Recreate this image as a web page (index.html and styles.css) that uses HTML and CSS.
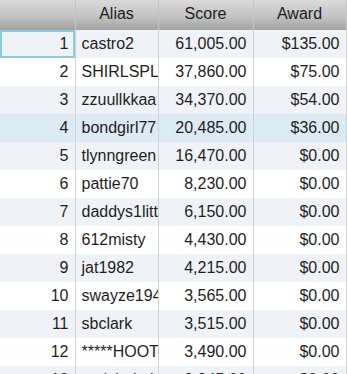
FILE: index.html
```html
<!DOCTYPE html>
<html>
<head>
<meta charset="utf-8">
<link rel="stylesheet" href="styles.css">
</head>
<body>
<table class="grid">
  <colgroup>
    <col class="c-rank"><col class="c-alias"><col class="c-score"><col class="c-award">
  </colgroup>
  <thead>
    <tr><th></th><th>Alias</th><th>Score</th><th>Award</th></tr>
  </thead>
  <tbody>
    <tr class="alt"><td class="num sel">1</td><td class="txt">castro2</td><td class="num">61,005.00</td><td class="num">$135.00</td></tr>
    <tr><td class="num">2</td><td class="txt">SHIRLSPL</td><td class="num">37,860.00</td><td class="num">$75.00</td></tr>
    <tr class="alt"><td class="num">3</td><td class="txt">zzuullkkaa</td><td class="num">34,370.00</td><td class="num">$54.00</td></tr>
    <tr class="hover"><td class="num">4</td><td class="txt">bondgirl77</td><td class="num">20,485.00</td><td class="num">$36.00</td></tr>
    <tr class="alt"><td class="num">5</td><td class="txt">tlynngreen</td><td class="num">16,470.00</td><td class="num">$0.00</td></tr>
    <tr><td class="num">6</td><td class="txt">pattie70</td><td class="num">8,230.00</td><td class="num">$0.00</td></tr>
    <tr class="alt"><td class="num">7</td><td class="txt">daddys1little</td><td class="num">6,150.00</td><td class="num">$0.00</td></tr>
    <tr><td class="num">8</td><td class="txt">612misty</td><td class="num">4,430.00</td><td class="num">$0.00</td></tr>
    <tr class="alt"><td class="num">9</td><td class="txt">jat1982</td><td class="num">4,215.00</td><td class="num">$0.00</td></tr>
    <tr><td class="num">10</td><td class="txt">swayze1948</td><td class="num">3,565.00</td><td class="num">$0.00</td></tr>
    <tr class="alt"><td class="num">11</td><td class="txt">sbclark</td><td class="num">3,515.00</td><td class="num">$0.00</td></tr>
    <tr><td class="num">12</td><td class="txt">*****HOOTIE</td><td class="num">3,490.00</td><td class="num">$0.00</td></tr>
    <tr class="alt"><td class="num">13</td><td class="txt">tonisbabyboo</td><td class="num">3,245.00</td><td class="num">$0.00</td></tr>
  </tbody>
</table>
</body>
</html>
```
FILE: styles.css
```css
html, body {
  margin: 0;
  padding: 0;
  background: #ffffff;
  overflow: hidden;
}
.grid {
  border-collapse: collapse;
  table-layout: fixed;
  width: 346px;
  font-family: "Liberation Sans", Arial, sans-serif;
  font-size: 16px;
  color: #1e1e1e;
}
.c-rank { width: 75px; }
.c-alias { width: 83px; }
.c-score { width: 95px; }
.c-award { width: 93px; }
.grid th {
  height: 30px;
  padding: 0 0 2px;
  font-weight: normal;
  text-align: center;
  color: #1c1c1c;
  background: linear-gradient(to bottom, #dadada 0%, #c2c2c2 55%, #a2a2a2 100%);
  border-right: 1px solid #c4c4c4;
  box-sizing: border-box;
}
.grid td {
  height: 28px;
  padding: 0 6px;
  box-sizing: border-box;
  white-space: nowrap;
  overflow: hidden;
  border-right: 1px solid #d2d2d2;
}
.grid td.num { text-align: right; }
.grid td.txt { text-align: left; text-overflow: clip; }
.grid tr.alt td { background: #eff3f8; }
.grid tr.hover td { background: #dcebf2; }
.grid td.sel {
  background: #f3f5fa;
  box-shadow: inset 0 0 0 2px #8ccbdb;
}
```
